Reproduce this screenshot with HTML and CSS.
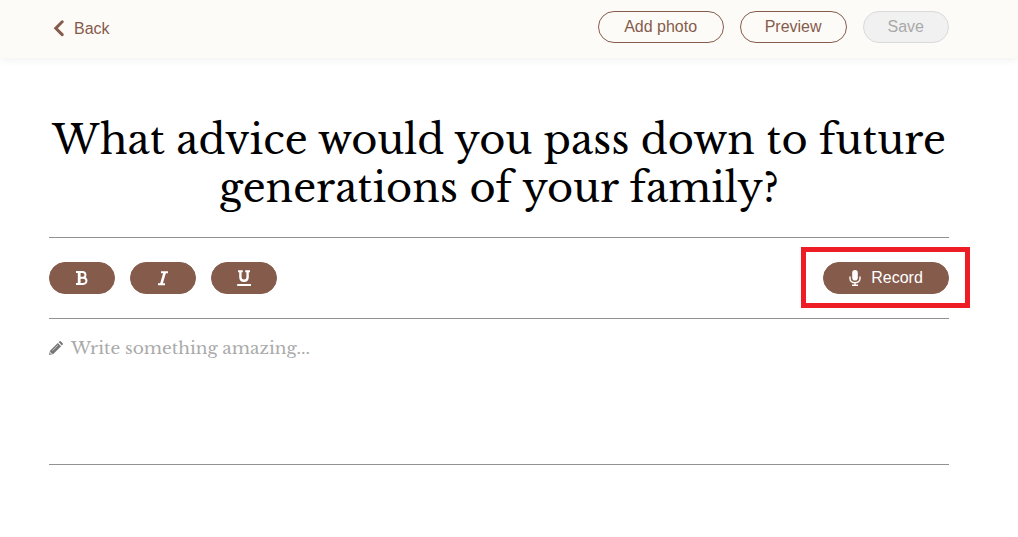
FILE: index.html
```html
<!DOCTYPE html>
<html lang="en">
<head>
<meta charset="utf-8">
<meta name="viewport" content="width=device-width, initial-scale=1">
<title>Write your story</title>
<link rel="stylesheet" href="styles.css">
</head>
<body>
<header class="topbar">
  <a class="back" href="#">
    <svg class="back-icon" viewBox="0 0 12 18" aria-hidden="true"><path d="M9.200 1.800 2.800 8.200l6.400 6.400"/></svg>
    Back
  </a>
  <div class="actions">
    <button class="btn outline wide" type="button">Add photo</button>
    <button class="btn outline" type="button">Preview</button>
    <button class="btn outline" type="button" disabled>Save</button>
  </div>
</header>
<main class="page">
  <h1 class="question">What advice would you pass down to future generations of your family?</h1>
  <div class="toolbar">
    <div class="formats">
      <button class="btn solid format" type="button" aria-label="Bold">
        <svg class="format-icon" viewBox="0 0 16 18" aria-hidden="true"><path d="M2 3.100H8.500C12.300 3.100 12.300 8.700 9 8.700H5M9 8.700C13.600 8.700 13.600 14.900 9.200 14.900H2" stroke-width="2"/><path d="M5.200 3.200V15" stroke-width="2.800"/></svg>
      </button>
      <button class="btn solid format" type="button" aria-label="Italic">
        <svg class="format-icon" viewBox="0 0 16 18" aria-hidden="true"><path d="M6 3.200H13M3 15.200H10" stroke-width="1.900"/><path d="M9.800 3.200 6.300 15.200" stroke-width="2.600"/></svg>
      </button>
      <button class="btn solid format" type="button" aria-label="Underline">
        <svg class="format-icon" viewBox="0 0 16 18" aria-hidden="true"><path d="M2 2.200H6.800M9.200 2.200H14" stroke-width="2"/><path d="M1.200 16H15" stroke-width="2"/><path d="M4.400 2.200V8.200C4.400 13 11.600 13 11.600 8.200V2.200" stroke-width="2.400"/></svg>
      </button>
    </div>
    <div class="record">
      <button class="btn solid wide" type="button">
        <svg class="mic-icon" viewBox="0 0 12 18" aria-hidden="true"><rect x="3.200" y="1" width="5.600" height="10.500" rx="2.800" fill="currentColor"/><path d="M1 7.500V9.500C1 15 11 15 11 9.500V7.500M6 13.500V16M3 16.200H9" fill="none" stroke="currentColor" stroke-width="1.400"/></svg>
        Record
      </button>
      <span class="highlight"></span>
    </div>
  </div>
  <div class="editor">
    <svg class="pencil-icon" viewBox="0 0 14 14" aria-hidden="true"><path d="M0 14 1 9.700 8.800 1.900 12.100 5.200 4.300 13ZM9.600 1.100 10.200.5Q11-.3 11.900.5L13.500 2.100Q14.300 3 13.500 3.800L12.900 4.400Z" fill="currentColor"/><path d="M3.500 9.600 9 4.100M1.500 10.800V12.500H3.200" fill="none" stroke="#fff" stroke-width=".6"/></svg>
    <textarea class="story" aria-label="Your story" placeholder="Write something amazing..."></textarea>
  </div>
</main>
</body>
</html>
```
FILE: styles.css
```css
* {
  box-sizing: border-box;
}

body {
  margin: 0;
  background: #fff;
  color: #000;
  font-family: "Liberation Sans", Arial, sans-serif;
  font-size: 16px;
}

.topbar {
  display: flex;
  justify-content: space-between;
  align-items: flex-start;
  padding: 11px 69px 12px 53px;
  background: #fdfbf7;
  box-shadow: 0 2px 8px rgba(0, 0, 0, 0.06);
}

.back {
  display: flex;
  align-items: center;
  gap: 9px;
  height: 35px;
  color: #855b4c;
  text-decoration: none;
}

.back-icon {
  width: 12px;
  height: 18px;
  fill: none;
  stroke: currentColor;
  stroke-width: 3;
  stroke-linecap: round;
}

.actions {
  display: flex;
  gap: 16px;
}

.btn {
  display: flex;
  align-items: center;
  justify-content: center;
  gap: 10px;
  height: 32px;
  padding: 0 24px;
  border: 1px solid #855b4c;
  border-radius: 16px;
  font: inherit;
}

.wide {
  min-width: 126px;
}

.outline {
  background: transparent;
  color: #855b4c;
}

.btn:disabled {
  background: #f1f1f1;
  border-color: #dadada;
  color: #a9a9a9;
}

.solid {
  background: #855b4c;
  color: #fff;
}

.page {
  padding: 58px 69px 0 49px;
}

.question {
  margin: 0;
  padding-bottom: 25px;
  font-family: "Libre Baskerville", "Liberation Serif", serif;
  font-size: 40px;
  font-weight: 400;
  line-height: 48px;
  text-align: center;
}

.toolbar {
  display: flex;
  justify-content: space-between;
  align-items: center;
  padding: 24px 0;
  border-top: 1px solid #919191;
  border-bottom: 1px solid #919191;
}

.formats {
  display: flex;
  gap: 15px;
}

.format {
  width: 66px;
}

.format-icon {
  flex: none;
  width: 16px;
  height: 18px;
  fill: none;
  stroke: currentColor;
}

.record {
  position: relative;
}

.mic-icon {
  width: 12px;
  height: 18px;
}

.highlight {
  position: absolute;
  inset: -15px -21px -14px -22px;
  border: 5px solid #ee1c25;
  pointer-events: none;
}

.editor {
  display: flex;
  gap: 8px;
  padding-top: 17px;
  border-bottom: 1px solid #919191;
}

.pencil-icon {
  flex: none;
  width: 14px;
  height: 14px;
  margin-top: 5px;
  color: #777;
}

.story {
  flex: 1;
  height: 128px;
  padding: 0;
  border: 0;
  outline: 0;
  resize: none;
  background: transparent;
  font-family: "Libre Baskerville", "Liberation Serif", serif;
  font-size: 17px;
  line-height: 26px;
}

.story::placeholder {
  color: #aaa;
}
```
